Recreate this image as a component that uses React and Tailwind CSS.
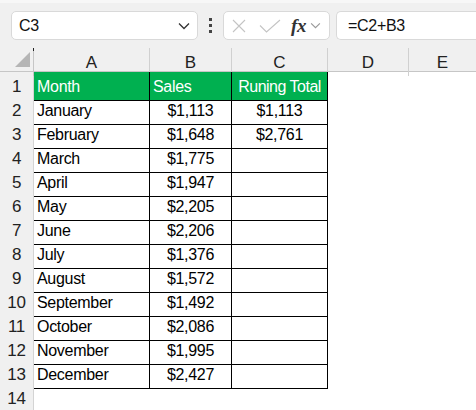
import React from 'react';

const rows = [
  ['January', '$1,113', '$1,113'],
  ['February', '$1,648', '$2,761'],
  ['March', '$1,775', ''],
  ['April', '$1,947', ''],
  ['May', '$2,205', ''],
  ['June', '$2,206', ''],
  ['July', '$1,376', ''],
  ['August', '$1,572', ''],
  ['September', '$1,492', ''],
  ['October', '$2,086', ''],
  ['November', '$1,995', ''],
  ['December', '$2,427', ''],
];

const cols = "grid grid-cols-[34px_116px_82px_96px_81px_1fr]";

const Chevron = ({ className }) => (
  <svg viewBox="0 0 12 8" className={className} fill="none" stroke="currentColor" strokeWidth="1.3">
    <path d="M1 1.5l5 5 5-5" />
  </svg>
);

function FormulaBar() {
  return (
    <div className="h-[48px] bg-[#f0f0f0] flex items-start pt-[11px] pl-[11px] border-t-[3px] border-[#f7f7f7] overflow-hidden">
      {/* name box */}
      <div className="shrink-0 w-[187px] h-[29px] -mt-[3px] rounded-[5px] border border-[#d9d9d9] bg-white flex items-center justify-between pl-[7px] pr-[7px]">
        <span className="text-[16px] text-[#111] tracking-[-0.3px]">C3</span>
        <Chevron className="w-[12px] h-[8px] text-[#333]" />
      </div>
      {/* grip dots */}
      <div className="shrink-0 w-[25px] h-[29px] -mt-[3px] flex flex-col items-center justify-center gap-[3px]">
        <span className="w-[3px] h-[3px] bg-[#444]" />
        <span className="w-[3px] h-[3px] bg-[#444]" />
        <span className="w-[3px] h-[3px] bg-[#444]" />
      </div>
      {/* cancel / enter / fx */}
      <div className="shrink-0 w-[107px] h-[29px] -mt-[3px] rounded-[5px] border border-[#d9d9d9] bg-white flex items-center pl-[8px]">
        <svg viewBox="0 0 14 14" className="w-[14px] h-[14px]" fill="none" stroke="#c4c4c4" strokeWidth="1.1">
          <path d="M1 1l12 12M13 1L1 13" />
        </svg>
        <svg viewBox="0 0 22 14" className="w-[22px] h-[14px] ml-[13px]" fill="none" stroke="#c4c4c4" strokeWidth="1.1">
          <path d="M1 6.5l6.5 6.5L21 1" />
        </svg>
        <span className="ml-[10px] text-[19px] italic font-bold text-[#333] font-['Liberation_Serif',serif] leading-none tracking-[-0.3px]">fx</span>
        <Chevron className="w-[11px] h-[7px] ml-[4px] text-[#999]" />
      </div>
      {/* formula */}
      <div className="shrink-0 ml-[6px] w-[160px] h-[29px] -mt-[3px] rounded-l-[5px] border border-r-0 border-[#d9d9d9] bg-white flex items-center pl-[11px]">
        <span className="text-[16px] text-[#111] tracking-[-0.3px]">=C2+B3</span>
      </div>
    </div>
  );
}

function ColumnHeader() {
  const letters = ['A', 'B', 'C', 'D', 'E'];
  return (
    <div className={`${cols} h-[24px] bg-[#f0f0f0] border-b border-[#c6c6c6]`}>
      <div className="relative border-r border-[#c6c6c6]">
        <span className="absolute right-[-1px] top-0 w-[1px] h-[3px] bg-[#222]" />
        <svg viewBox="0 0 16 16" className="absolute left-[15px] top-[4px] w-[16px] h-[16px]">
          <path d="M15 0V15H0Z" fill="#b5b5b5" />
        </svg>
      </div>
      {letters.map((l, i) => (
        <div
          key={l}
          className={`flex items-center justify-center text-[17px] text-[#222] pt-[2px] ${i < 4 ? 'border-r border-[#d0d0d0]' : ''}`}
        >
          {l}
        </div>
      ))}
    </div>
  );
}

function RowHead({ n }) {
  return (
    <div className="bg-[#f0f0f0] border-r border-b border-[#d4d4d4] flex items-center justify-center text-[17px] text-[#222] pt-[2px] tracking-[-0.3px]">
      {n}
    </div>
  );
}

const cell = "text-[16px] text-black tracking-[-0.3px] border-r border-b border-black flex items-center pt-[2px] whitespace-nowrap";

export default function App() {
  return (
    <div className="w-[476px] h-[410px] overflow-hidden bg-white font-['Liberation_Sans',Arial,sans-serif]">
      <FormulaBar />
      <ColumnHeader />

      {/* header row */}
      <div className={`${cols} h-[24px]`}>
        <RowHead n={1} />
        <div className={`${cell} bg-[#00b050] text-white pl-[3px]`}>Month</div>
        <div className={`${cell} bg-[#00b050] text-white pl-[3px]`}>Sales</div>
        <div className={`${cell} bg-[#00b050] text-white justify-center tracking-[-0.5px]`}>Runing Total</div>
        <div />
        <div />
      </div>

      {rows.map((r, i) => (
        <div key={r[0]} className={`${cols} h-[24px]`}>
          <RowHead n={i + 2} />
          <div className={`${cell} pl-[3px]`}>{r[0]}</div>
          <div className={`${cell} justify-center`}>{r[1]}</div>
          <div className={`${cell} justify-center`}>{r[2]}</div>
          <div />
          <div />
        </div>
      ))}

      <div className={`${cols} h-[24px]`}>
        <RowHead n={14} />
        <div />
        <div />
        <div />
        <div />
        <div />
      </div>
    </div>
  );
}
